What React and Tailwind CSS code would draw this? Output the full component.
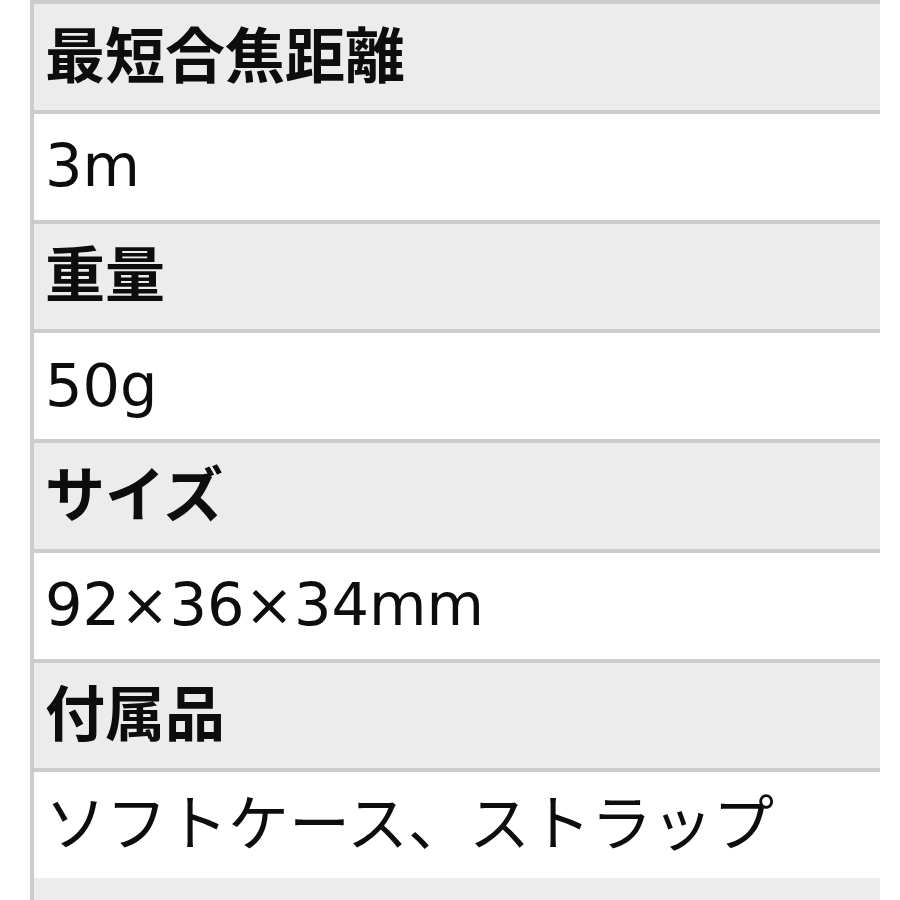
import React from 'react';

const specs = [
  { label: '最短合焦距離', value: '3m', jp: false },
  { label: '重量', value: '50g', jp: false },
  { label: 'サイズ', value: '92×36×34mm', jp: false },
  { label: '付属品', value: 'ソフトケース、ストラップ', jp: true },
];

const App = () => {
  return (
    <div className="w-[900px] h-[900px] overflow-hidden bg-white">
      <dl className="ml-[30px] w-[850px] border-l-4 border-[#cccccc] font-['DejaVu_Sans','Noto_Sans_CJK_JP',sans-serif] text-[#0d0d0d]">
        {specs.map((spec) => (
          <React.Fragment key={spec.label}>
            <dt className="h-[109.75px] border-t-4 border-[#cccccc] bg-[#ececec] pl-[11px] flex items-center font-bold text-[60px]">
              {spec.label}
            </dt>
            <dd
              className={
                spec.jp
                  ? 'h-[109.75px] border-t-4 border-[#cccccc] bg-white pl-[11px] flex items-center text-[61px]'
                  : 'h-[109.75px] border-t-4 border-[#cccccc] bg-white pl-[11px] flex items-center text-[59px]'
              }
            >
              {spec.value}
            </dd>
          </React.Fragment>
        ))}
        {/* next header, cut off by the window */}
        <dt className="h-[60px] bg-[#ececec]" />
      </dl>
    </div>
  );
};

export default App;
